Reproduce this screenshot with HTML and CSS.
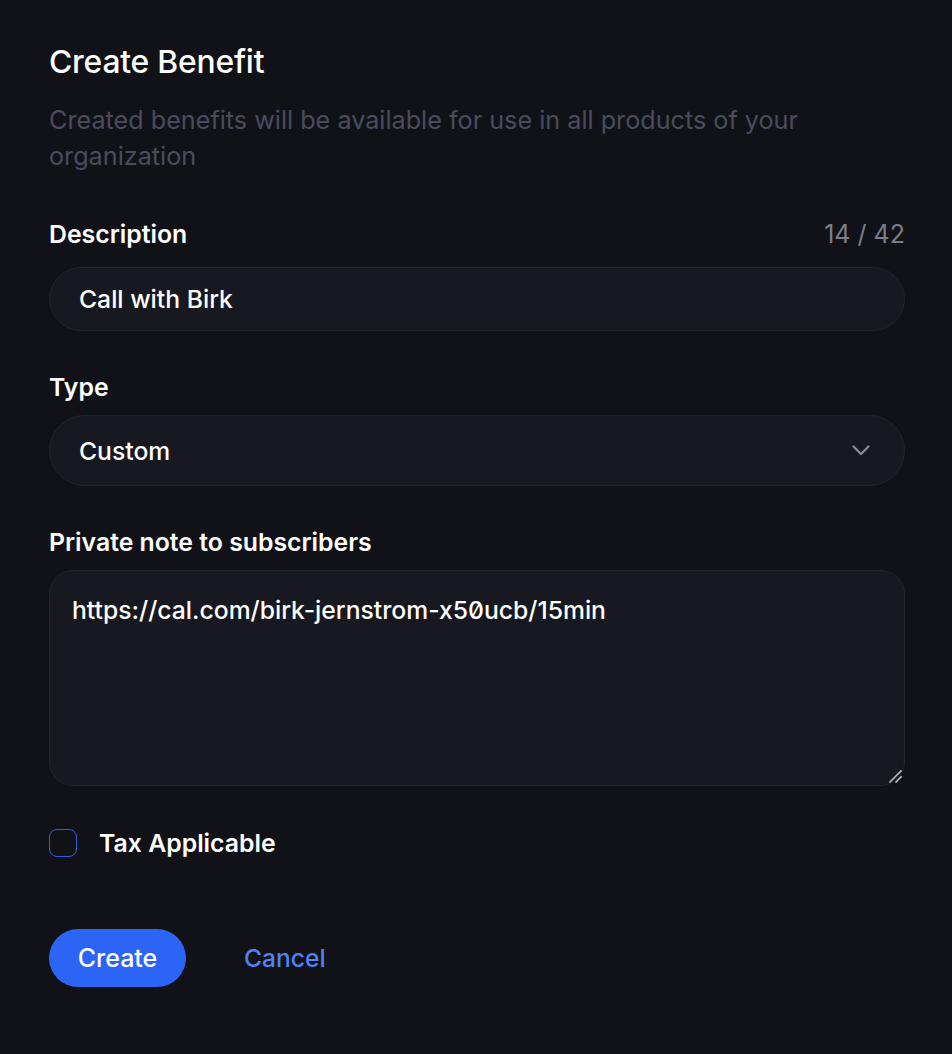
FILE: index.html
```html
<!DOCTYPE html>
<html lang="en">
<head>
<meta charset="utf-8">
<title>Create Benefit</title>
<link rel="stylesheet" href="styles.css">
</head>
<body>
<div class="page">
  <header class="head">
    <h1 class="title">Create Benefit</h1>
    <p class="subtitle">Created benefits will be available for use in all products of your organization</p>
  </header>

  <div class="field field-desc">
    <div class="label-row">
      <label class="label">Description</label>
      <span class="counter">14 / 42</span>
    </div>
    <div class="input">Call with Birk</div>
  </div>

  <div class="field field-type">
    <label class="label">Type</label>
    <div class="select">
      <span>Custom</span>
      <svg class="chev" width="18" height="11" viewBox="0 0 18 11"><path d="M1.5 1.5 L9 9 L16.5 1.5" fill="none" stroke="#8a8c98" stroke-width="2.2" stroke-linecap="round" stroke-linejoin="round"/></svg>
    </div>
  </div>

  <div class="field field-note">
    <label class="label">Private note to subscribers</label>
    <div class="textarea">
      <span class="note-text">https://cal.com/birk-jernstrom-x50ucb/15min</span>
      <svg class="grip" width="14" height="14" viewBox="0 0 14 14"><path d="M13 2 L2 13 M13 8 L8 13" stroke="#b9b9bd" stroke-width="1.6" stroke-linecap="square"/></svg>
    </div>
  </div>

  <div class="check-row">
    <span class="checkbox"></span>
    <span class="check-label">Tax Applicable</span>
  </div>

  <div class="actions">
    <button class="btn-primary">Create</button>
    <button class="btn-link">Cancel</button>
  </div>
</div>
</body>
</html>
```
FILE: styles.css
```css
html, body {
  margin: 0;
  padding: 0;
  background: #111217;
}
body {
  font-family: Inter, "Noto Sans", sans-serif;
  color: #ffffff;
  width: 952px;
  height: 1054px;
}
.page {
  padding: 38px 47px 0 49px;
  display: flex;
  flex-direction: column;
}
.title {
  margin: 0;
  font-size: 31.8px;
  font-weight: 500;
  line-height: 48px;
  letter-spacing: -0.2px;
}
.subtitle {
  margin: 16px 0 0 0;
  font-size: 25.2px;
  line-height: 36px;
  color: #4a4c5e;
  max-width: 830px;
}
.field {
  display: flex;
  flex-direction: column;
}
.field-desc { margin-top: 44px; }
.field-type { margin-top: 40px; }
.field-note { margin-top: 40px; }
.label-row {
  display: flex;
  justify-content: space-between;
  align-items: center;
}
.label {
  font-size: 24.8px;
  font-weight: 600;
  line-height: 32px;
}
.counter {
  font-size: 25px;
  color: #7b7d8c;
  line-height: 32px;
}
.input {
  margin-top: 17px;
  height: 62px;
  border: 1px solid #22232b;
  background: #181920;
  border-radius: 32px;
  padding: 0 29px;
  display: flex;
  align-items: center;
  font-size: 24.7px;
  font-weight: 500;
  line-height: 30px;
}
.select {
  margin-top: 12px;
  height: 69px;
  border: 1px solid #22232b;
  background: #181920;
  border-radius: 36px;
  padding: 0 34px 0 29px;
  display: flex;
  align-items: center;
  justify-content: space-between;
  font-size: 24.7px;
  font-weight: 500;
  line-height: 30px;
}
.textarea {
  margin-top: 12px;
  box-sizing: border-box;
  height: 216px;
  border: 1px solid #22232b;
  background: #181920;
  border-radius: 24px;
  padding: 24px 22px;
  position: relative;
  font-size: 24.7px;
  font-weight: 500;
  line-height: 30px;
  font-feature-settings: "zero" 1;
}
.grip {
  position: absolute;
  right: 2px;
  bottom: 2px;
}
.check-row {
  margin-top: 42px;
  display: flex;
  align-items: center;
  gap: 22px;
}
.checkbox {
  width: 26px;
  height: 26px;
  border: 1.5px solid #2e60db;
  border-radius: 8px;
  background: #111217;
}
.check-label {
  font-size: 24.8px;
  font-weight: 600;
  line-height: 30px;
}
.actions {
  margin-top: 71px;
  display: flex;
  align-items: center;
  gap: 30px;
}
.btn-primary {
  height: 58px;
  width: 137px;
  border: none;
  border-radius: 29px;
  background: #2c65f5;
  color: #ffffff;
  font-family: Inter, "Noto Sans", sans-serif;
  font-size: 25px;
  font-weight: 500;
  padding: 0;
}
.btn-link {
  background: none;
  border: none;
  color: #4f82f2;
  font-family: Inter, "Noto Sans", sans-serif;
  font-size: 24.6px;
  font-weight: 500;
  padding: 0 28px;
}
```
